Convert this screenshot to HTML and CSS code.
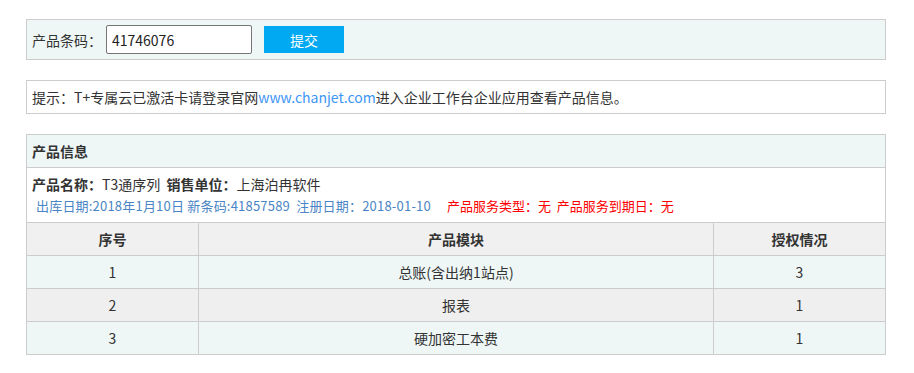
FILE: index.html
```html
<!DOCTYPE html>
<html lang="zh">
<head>
    <meta charset="UTF-8">
    <title>产品信息查询</title>
    <link rel="stylesheet" href="styles.css">
</head>
<body>
    <div class="wrap">
        <div class="box search">
            <label for="code">产品条码：</label>
            <input type="text" id="code" value="41746076">
            <button>提交</button>
        </div>

        <div class="box tip">
            提示：T+专属云已激活卡请登录官网<a href="#">www.chanjet.com</a>进入企业工作台企业应用查看产品信息。
        </div>

        <div class="box info">
            <div class="info-head">产品信息</div>
            <div class="info-body">
                <p><b>产品名称：</b>T3通序列&nbsp;&nbsp;<b>销售单位：</b>上海泊冉软件</p>
                <p class="sub"><span class="blue">出库日期:2018年1月10日 新条码:41857589&nbsp; 注册日期：2018-01-10</span><span class="red">产品服务类型：无&nbsp; 产品服务到期日：无</span></p>
            </div>
            <table>
                <tr class="th">
                    <td class="c1">序号</td>
                    <td>产品模块</td>
                    <td class="c3">授权情况</td>
                </tr>
                <tr class="odd">
                    <td>1</td>
                    <td>总账(含出纳1站点)</td>
                    <td>3</td>
                </tr>
                <tr class="even">
                    <td>2</td>
                    <td>报表</td>
                    <td>1</td>
                </tr>
                <tr class="odd">
                    <td>3</td>
                    <td>硬加密工本费</td>
                    <td>1</td>
                </tr>
            </table>
        </div>
    </div>
</body>
</html>
```

FILE: styles.css
```css
body {
    margin: 0;
    padding: 19px 0 0 26px;
    font-family: "Microsoft YaHei", "Noto Sans CJK SC", sans-serif;
    font-size: 14px;
    color: #333;
    background: #fff;
}
.wrap {
    width: 860px;
}
.box {
    border: 1px solid #ccc;
    margin-bottom: 20px;
    box-sizing: border-box;
}
.search {
    height: 41px;
    padding: 5px;
    background: #eef7f6;
    display: flex;
    align-items: center;
}
.search label {
    width: 74px;
    line-height: 20px;
}
.search input {
    width: 146px;
    height: 29px;
    box-sizing: border-box;
    border: 1px solid #767676;
    border-radius: 2px;
    padding: 0 5px;
    margin: 0;
    font-family: "Microsoft YaHei", "Noto Sans CJK SC", sans-serif;
    font-size: 14px;
    color: #222;
    outline: none;
}
.search button {
    margin-left: 12px;
    width: 80px;
    height: 27px;
    border: none;
    background: #00a9f1;
    color: #fff;
    font-family: "Microsoft YaHei", "Noto Sans CJK SC", sans-serif;
    font-size: 14px;
    cursor: pointer;
}
.tip {
    height: 34px;
    line-height: 32px;
    padding-left: 5px;
}
.tip a {
    color: #3d95f5;
    text-decoration: none;
}
.info-head {
    height: 32px;
    line-height: 32px;
    padding-left: 5px;
    font-weight: bold;
    background: #eef7f6;
    border-bottom: 1px solid #ccc;
}
.info-body {
    padding: 5px 5px 5px;
}
.info-body p {
    margin: 0;
    line-height: 22px;
}
.info-body .sub {
    padding-left: 4px;
    font-size: 13px;
}
.blue {
    color: #4a85c5;
    letter-spacing: 0.2px;
}
.red {
    color: #ff0000;
    margin-left: 16px;
}
table {
    width: 100%;
    border-collapse: collapse;
}
td {
    height: 32px;
    padding: 0;
    text-align: center;
    border-top: 1px solid #ccc;
    border-left: 1px solid #ccc;
}
td:first-child {
    border-left: none;
}
.c1, .c3 {
    width: 171px;
}
.th td {
    font-weight: bold;
    background: #f0f0f0;
}
.odd td {
    background: #eef7f6;
}
.even td {
    background: #efefef;
}
```
